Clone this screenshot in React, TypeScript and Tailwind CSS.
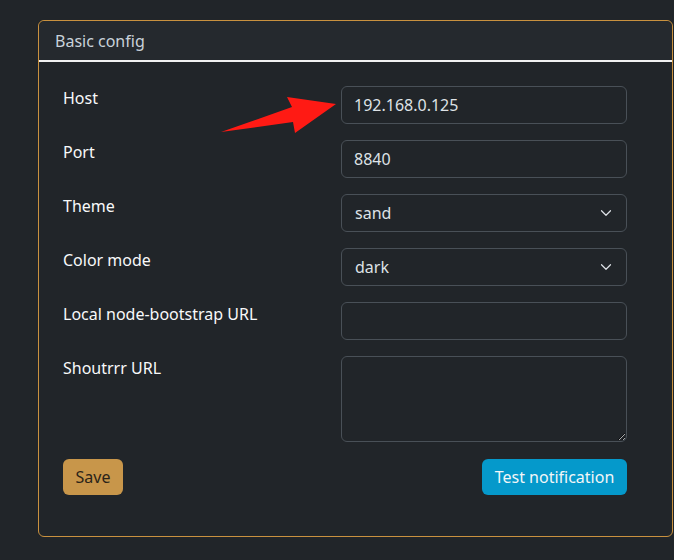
import { ChevronDown } from 'lucide-react';

const rows = [
  { label: 'Host', kind: 'input', value: '192.168.0.125' },
  { label: 'Port', kind: 'input', value: '8840' },
  { label: 'Theme', kind: 'select', value: 'sand' },
  { label: 'Color mode', kind: 'select', value: 'dark' },
  { label: 'Local node-bootstrap URL', kind: 'input', value: '' },
];

function Field({ kind, value }: { kind: string; value: string }) {
  if (kind === 'select') {
    return (
      <div className="flex items-center justify-between h-[38px] w-[286px] rounded-[6px] border border-[#495057] bg-[#212529] pl-[13px] pr-[11px] text-[16px] text-[#dee2e6]">
        <span>{value}</span>
        <ChevronDown size={18} strokeWidth={1.6} className="text-[#dee2e6]" />
      </div>
    );
  }
  return (
    <input
      readOnly
      value={value}
      className="h-[38px] w-[286px] rounded-[6px] border border-[#495057] bg-[#212529] px-[12px] text-[16px] text-[#dee2e6] outline-none"
    />
  );
}

export default function App() {
  return (
    <div className="relative min-h-[560px] bg-[#212529] pt-[20px] pl-[38px] pb-[23px] font-['Noto_Sans',sans-serif]">
      <div className="w-[635px] rounded-[6px] border border-[#c9913f] bg-[#212529]">
        <div className="h-[41px] flex items-center px-[16px] bg-[#25292e] border-b-2 border-[#f1f1f1] rounded-t-[6px] text-[16px] text-[#c9d2da]">
          Basic config
        </div>
        <div className="pt-[24px] pl-[24px] pb-[41px]">
          <div className="flex flex-col gap-[16px]">
            {rows.map((r) => (
              <div key={r.label} className="flex items-start">
                <label className="w-[278px] text-[16px] leading-[24px] text-[#f8f9fa]">{r.label}</label>
                <Field kind={r.kind} value={r.value} />
              </div>
            ))}
            <div className="flex items-start">
              <label className="w-[278px] text-[16px] leading-[24px] text-[#f8f9fa]">Shoutrrr URL</label>
              <textarea
                readOnly
                className="h-[86px] w-[286px] rounded-[6px] border border-[#495057] bg-[#212529] px-[12px] py-[6px] text-[16px] text-[#dee2e6] outline-none"
              />
            </div>
          </div>
          <div className="mt-[17px] flex w-[564px] items-center justify-between">
            <button className="h-[36px] w-[60px] rounded-[6px] bg-[#c8964a] text-[16px] text-[#2a2419]">Save</button>
            <button className="h-[36px] w-[145px] rounded-[6px] bg-[#0599cb] text-[16px] text-[#f2f6f8]">Test notification</button>
          </div>
        </div>
      </div>
      <svg className="absolute left-0 top-0" width="674" height="200" viewBox="0 0 674 200">
        <polygon points="221,132 292,107 287,97 336,104 295,133 293,122" fill="#ff1a14" />
      </svg>
    </div>
  );
}
